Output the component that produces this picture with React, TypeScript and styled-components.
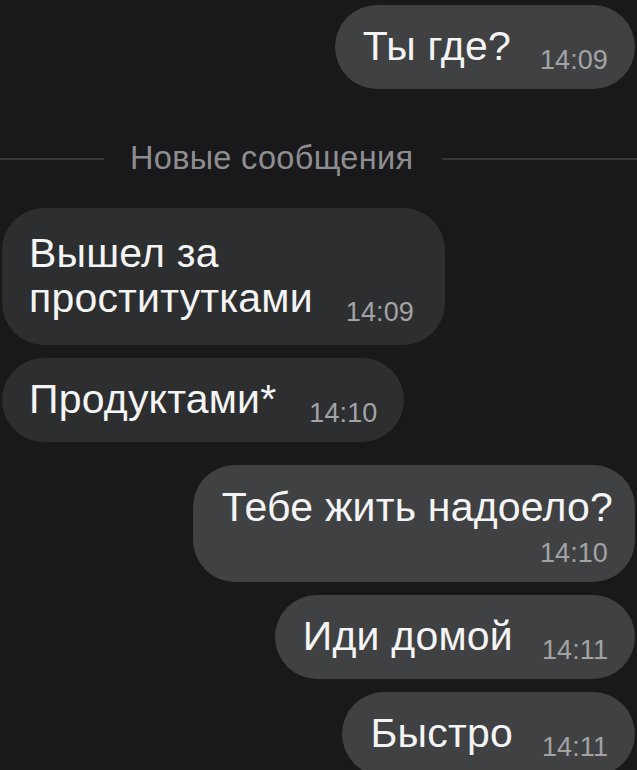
import styled, { createGlobalStyle } from 'styled-components';

const GlobalStyle = createGlobalStyle`
	html, body {
		margin: 0;
		padding: 0;
		background: #19191b;
	}
	body {
		font-family: 'Liberation Sans', Arial, sans-serif;
		-webkit-font-smoothing: antialiased;
	}
`;

const Chat = styled.div`
	display: flex;
	flex-direction: column;
	gap: 13px;
	padding: 5px 2px 0;
	height: 770px;
	box-sizing: border-box;
	overflow: hidden;
`;

const Row = styled.div<{ $out?: boolean; $gapTop?: number }>`
	display: flex;
	justify-content: ${(p) => (p.$out ? 'flex-end' : 'flex-start')};
	margin-top: ${(p) => p.$gapTop ?? 0}px;
	flex-shrink: 0;
`;

const Bubble = styled.div<{ $out?: boolean; $width?: number; $stacked?: boolean; $multi?: boolean }>`
	box-sizing: border-box;
	background: ${(p) => (p.$out ? '#404143' : '#2d2e30')};
	border-radius: 42px;
	min-height: 84px;
	padding: ${(p) =>
		p.$stacked ? '20px 22px 14px 29px' : p.$multi ? '23px 26px 24px 27px' : `19px 27px 20px ${p.$out ? 28 : 27}px`};
	${(p) => (p.$width ? `width: ${p.$width}px;` : '')}
	color: #f4f4f4;
	font-size: 41px;
	line-height: 45px;
	letter-spacing: 0.2px;
`;

const Time = styled.span<{ $block?: boolean; $out?: boolean }>`
	display: ${(p) => (p.$block ? 'block' : 'inline-block')};
	text-align: ${(p) => (p.$block ? 'right' : 'left')};
	margin-left: ${(p) => (p.$block ? 0 : p.$out ? 29 : 33)}px;
	margin-top: ${(p) => (p.$block ? 8 : 0)}px;
	padding-right: ${(p) => (p.$block ? 5 : 0)}px;
	font-size: 27px;
	line-height: ${(p) => (p.$block ? '30px' : '10px')};
	letter-spacing: 0.1px;
	color: #a3a3a5;
	vertical-align: -9px;
`;

const Divider = styled.div`
	display: flex;
	align-items: center;
	height: 30px;
	margin: 41px -2px 22px;
	flex-shrink: 0;
`;

const Line = styled.div<{ $grow?: boolean }>`
	height: 2px;
	margin-top: 2px;
	background: #37373a;
	flex: ${(p) => (p.$grow ? '1 1 auto' : '0 0 104px')};
`;

const DividerText = styled.span`
	color: #8e8e91;
	font-size: 32.5px;
	line-height: 30px;
	letter-spacing: 0.3px;
	margin: 0 29px 0 26px;
	white-space: nowrap;
`;

interface Message {
	id: number;
	text: string;
	time: string;
	out: boolean;
	width?: number;
	stacked?: boolean;
	multi?: boolean;
	gapTop?: number;
}

const before: Message[] = [{ id: 1, text: 'Ты где?', time: '14:09', out: true }];

const after: Message[] = [
	{ id: 2, text: 'Вышел за проститутками', time: '14:09', out: false, width: 443, multi: true },
	{ id: 3, text: 'Продуктами*', time: '14:10', out: false },
	{ id: 4, text: 'Тебе жить надоело?', time: '14:10', out: true, stacked: true, gapTop: 10 },
	{ id: 5, text: 'Иди домой', time: '14:11', out: true },
	{ id: 6, text: 'Быстро', time: '14:11', out: true },
];

function Msg({ m }: { m: Message }) {
	return (
		<Row $out={m.out} $gapTop={m.gapTop}>
			<Bubble $out={m.out} $width={m.width} $stacked={m.stacked} $multi={m.multi}>
				{m.text}
				<Time $block={m.stacked} $out={m.out}>
					{m.time}
				</Time>
			</Bubble>
		</Row>
	);
}

export default function App() {
	return (
		<>
			<GlobalStyle />
			<Chat>
				{before.map((m) => (
					<Msg key={m.id} m={m} />
				))}
				<Divider>
					<Line />
					<DividerText>Новые сообщения</DividerText>
					<Line $grow />
				</Divider>
				{after.map((m) => (
					<Msg key={m.id} m={m} />
				))}
			</Chat>
		</>
	);
}
